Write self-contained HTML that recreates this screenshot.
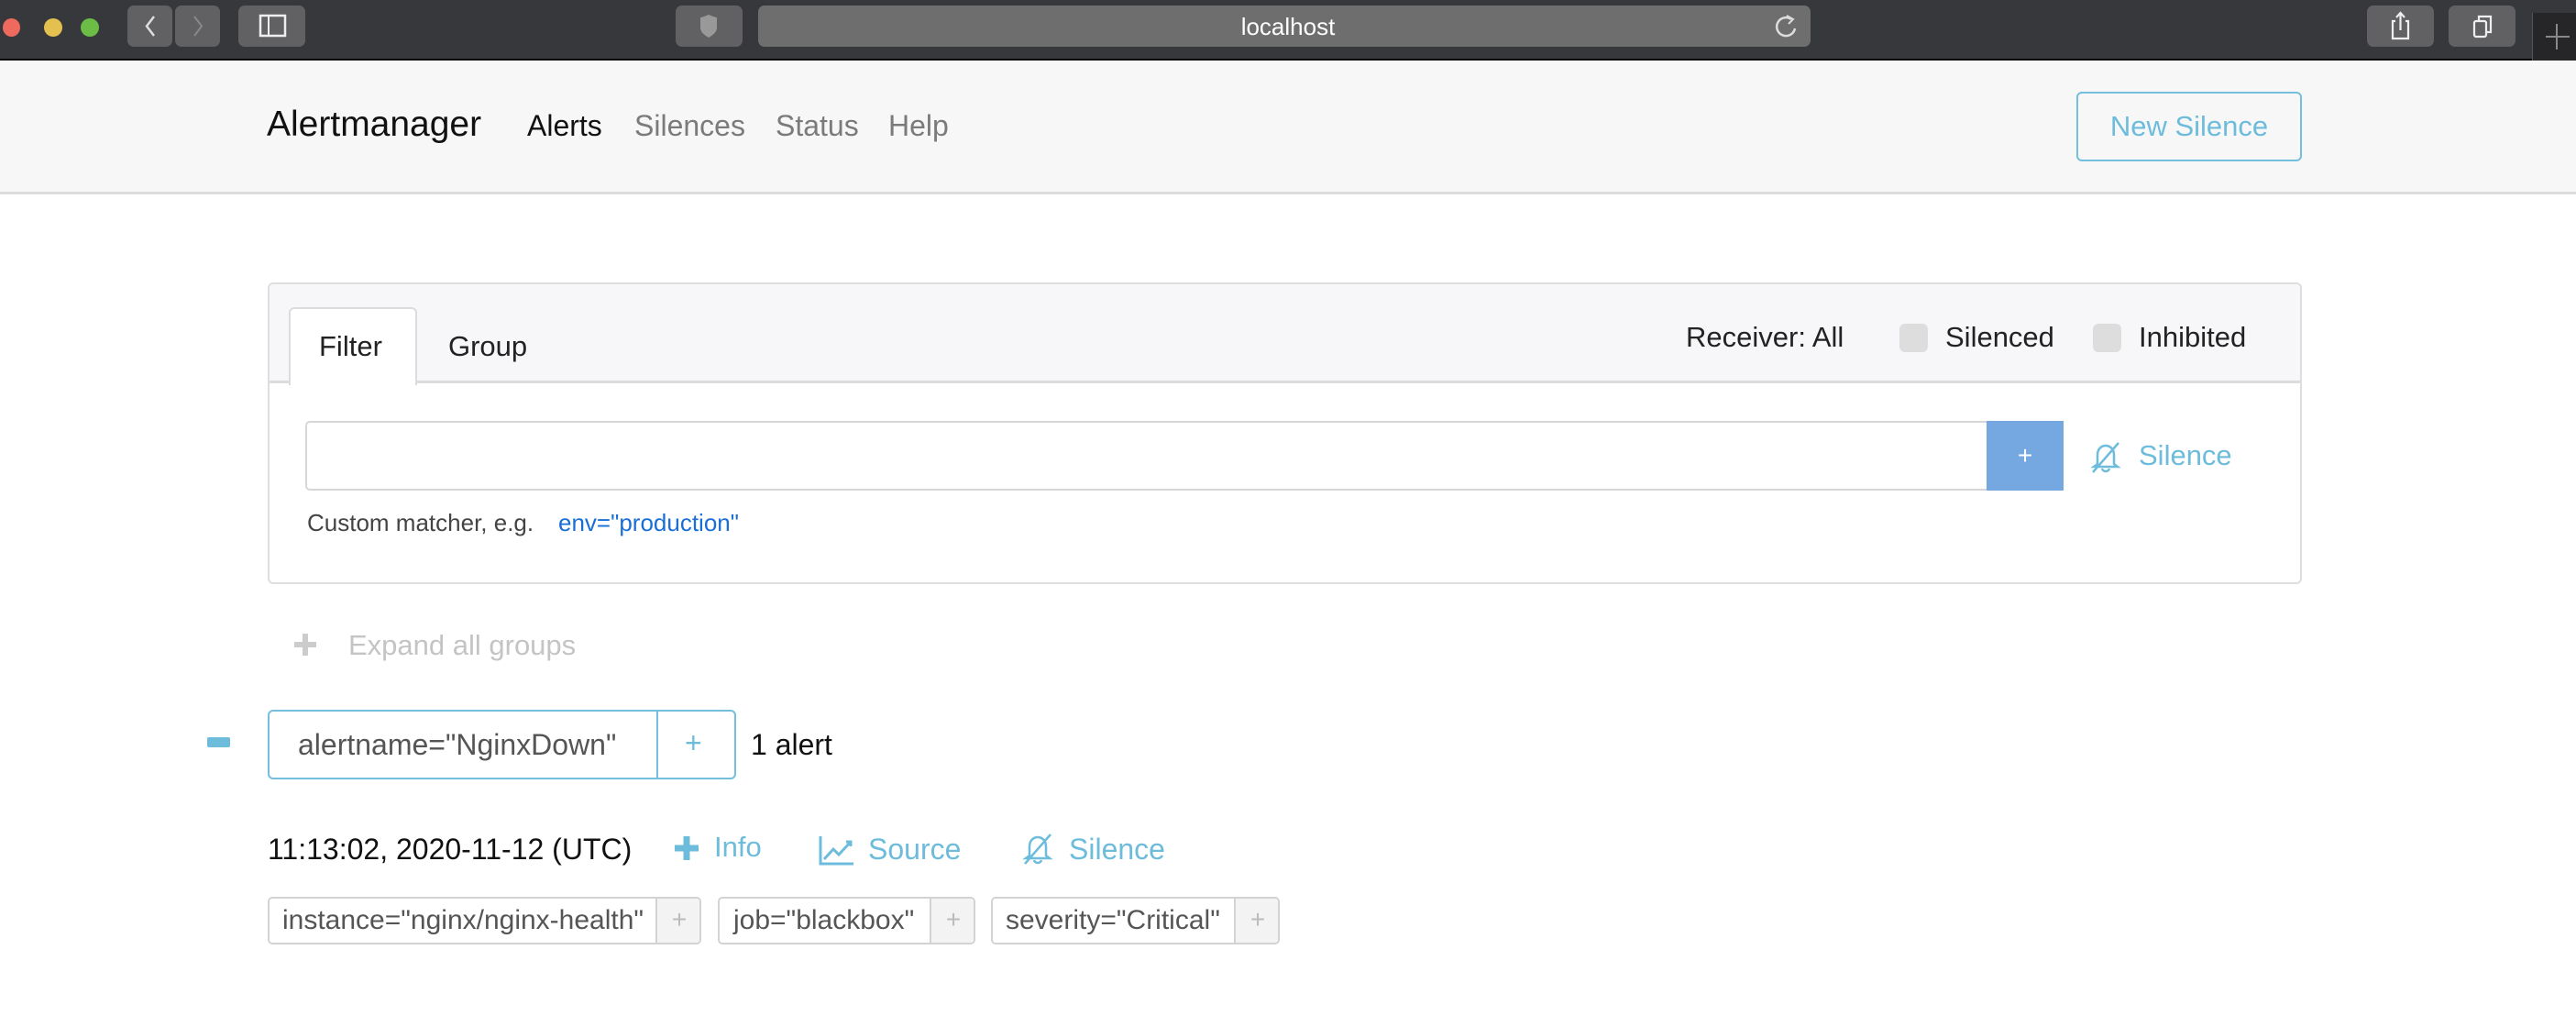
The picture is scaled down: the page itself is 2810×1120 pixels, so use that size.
<!DOCTYPE html>
<html><head><meta charset="utf-8"><style>
*{box-sizing:border-box;margin:0;padding:0}
body{width:2810px;height:1120px;background:#fff;font-family:"Liberation Sans",Arial,sans-serif;position:relative;overflow:hidden;color:#222}
.a{position:absolute;white-space:nowrap}
.tb{left:0;top:0;width:2810px;height:66px;background:#37383b;border-bottom:2px solid #0b0b0b}
.btn{position:absolute;top:6px;height:45px;background:#616163;border-radius:7px}
.hdr{left:0;top:66px;width:2810px;height:146px;background:#f7f7f7;border-bottom:3px solid #dcdcdc}
.vc{display:flex;align-items:center}
</style></head><body>
<div class="a tb">
 <div class="a" style="left:3px;top:20px;width:19px;height:20px;border-radius:50%;background:#ee6a5e"></div>
 <div class="a" style="left:48px;top:20px;width:20px;height:20px;border-radius:50%;background:#e3c04f"></div>
 <div class="a" style="left:88px;top:20px;width:20px;height:20px;border-radius:50%;background:#6cbd45"></div>
 <div class="btn" style="left:139px;width:49px"><svg width="49" height="45"><path d="M29 12 L21 22.5 L29 33" stroke="#ddd" stroke-width="2.5" fill="none"/></svg></div>
 <div class="btn" style="left:191px;width:49px"><svg width="49" height="45"><path d="M21 12 L29 22.5 L21 33" stroke="#888" stroke-width="2" fill="none"/></svg></div>
 <div class="btn" style="left:260px;width:73px"><svg width="73" height="45"><rect x="24" y="11" width="27" height="22" stroke="#eee" stroke-width="2.5" fill="none"/><line x1="33" y1="11" x2="33" y2="33" stroke="#eee" stroke-width="2"/></svg></div>
 <div class="btn" style="left:737px;width:73px"><svg width="73" height="45"><path d="M36 10 C31 12 28 13 27 13 L27 24 C27 29 31 32 36 35 C41 32 45 29 45 24 L45 13 C44 13 41 12 36 10Z" fill="#999"/></svg></div>
 <div class="btn" style="left:827px;width:1148px;background:#6e6e6f"></div>
 <div class="a" style="left:1340px;top:14px;width:130px;text-align:center;color:#fff;font-size:26px">localhost</div>
 <svg class="a" style="left:1935px;top:14px" width="28" height="30"><path d="M19 7 A10 10 0 1 0 23 17" stroke="#ddd" stroke-width="2.5" fill="none"/><path d="M14 3 L21 7 L16 12" fill="none" stroke="#ddd" stroke-width="2"/></svg>
 <div class="btn" style="left:2582px;width:73px"><svg width="73" height="45"><path d="M31 17 L28 17 L28 36 L45 36 L45 17 L42 17 M36.5 27 L36.5 8 M32 13 L36.5 8 L41 13" stroke="#eee" stroke-width="2.2" fill="none"/></svg></div>
 <div class="btn" style="left:2671px;width:73px"><svg width="73" height="45"><rect x="28" y="17" width="13" height="17" rx="2" stroke="#eee" stroke-width="2.2" fill="none"/><path d="M33 17 L33 12 L46 12 L46 29 L41 29" stroke="#eee" stroke-width="2.2" fill="none"/></svg></div>
 <div class="a" style="left:2762px;top:14px;width:48px;height:52px;background:#262628;border-left:1px solid #555"><svg width="48" height="52"><path d="M26 12 V40 M14 26 H40" stroke="#888" stroke-width="2"/></svg></div>
</div>
<div class="a hdr">
 <div class="a" style="left:291px;top:48px;font-size:39px;color:#111">Alertmanager</div>
 <div class="a" style="left:575px;top:53px;font-size:32px;color:#111">Alerts</div>
 <div class="a" style="left:692px;top:53px;font-size:32px;color:#7b7b7b">Silences</div>
 <div class="a" style="left:846px;top:53px;font-size:32px;color:#7b7b7b">Status</div>
 <div class="a" style="left:969px;top:53px;font-size:32px;color:#7b7b7b">Help</div>
 <div class="a vc" style="left:2265px;top:34px;width:246px;height:76px;border:2px solid #73bfdd;border-radius:6px;justify-content:center;color:#6dbcdc;font-size:31px">New Silence</div>
</div>
<div class="a" style="left:292px;top:308px;width:2219px;height:329px;border:2px solid #dedede;border-radius:6px;overflow:hidden">
 <div class="a" style="left:0;top:0;width:2219px;height:108px;background:#f7f7f9;border-bottom:3px solid #dcdcdc"></div>
 <div class="a" style="left:21px;top:25px;width:140px;height:85px;background:#fff;border:2px solid #dcdcdc;border-bottom:none;border-radius:6px 6px 0 0"></div>
 <div class="a" style="left:54px;top:50px;font-size:31px;color:#222">Filter</div>
 <div class="a" style="left:195px;top:50px;font-size:31px;color:#222">Group</div>
 <div class="a" style="left:1545px;top:40px;font-size:31px;color:#222">Receiver: All</div>
 <div class="a" style="left:1778px;top:43px;width:31px;height:31px;background:#ddd;border-radius:6px"></div>
 <div class="a" style="left:1828px;top:40px;font-size:31px;color:#222">Silenced</div>
 <div class="a" style="left:1989px;top:43px;width:31px;height:31px;background:#ddd;border-radius:6px"></div>
 <div class="a" style="left:2039px;top:40px;font-size:31px;color:#222">Inhibited</div>
 <div class="a" style="left:39px;top:149px;width:1836px;height:76px;border:2px solid #d6d6d6;border-right:none;border-radius:5px 0 0 5px;background:#fff"></div>
 <div class="a vc" style="left:1873px;top:149px;width:84px;height:76px;background:#75a7e0;justify-content:center;color:#fff;font-size:28px">+</div>
 <svg class="a" style="left:1983px;top:170px" width="40" height="38" viewBox="0 0 40 38"><path d="M11 26 L11 16 C11 10 15 6 20 6 C25 6 29 10 29 16 L29 26 L33 29 L7 29 Z M16 31 C17 35 23 35 24 31 M6 35 L34 3" fill="none" stroke="#6dbcdc" stroke-width="2.5"/></svg>
 <div class="a" style="left:2039px;top:169px;font-size:31px;color:#6dbcdc">Silence</div>
 <div class="a" style="left:41px;top:245px;font-size:26px;color:#444">Custom matcher, e.g.</div>
 <div class="a" style="left:315px;top:245px;font-size:26px;color:#1a6fd6">env="production"</div>
</div>
<svg class="a" style="left:319px;top:688px" width="28" height="30"><path d="M14 3 V27 M2 15 H26" stroke="#ccc" stroke-width="6"/></svg>
<div class="a" style="left:380px;top:686px;font-size:31px;color:#c4c4c4">Expand all groups</div>
<div class="a" style="left:226px;top:804px;width:25px;height:11px;background:#6dbcdc;border-radius:2px"></div>
<div class="a" style="left:292px;top:774px;width:511px;height:76px;border:2px solid #73bfdd;border-radius:6px"></div>
<div class="a" style="left:716px;top:774px;width:2px;height:76px;background:#73bfdd"></div>
<div class="a" style="left:325px;top:794px;font-size:32px;color:#555">alertname="NginxDown"</div>
<div class="a" style="left:747px;top:792px;font-size:32px;color:#6dbcdc">+</div>
<div class="a" style="left:819px;top:794px;font-size:32px;color:#111">1 alert</div>
<div class="a" style="left:292px;top:908px;font-size:32px;color:#111">11:13:02, 2020-11-12 (UTC)</div>
<svg class="a" style="left:736px;top:911px" width="26" height="28"><path d="M13 1 V27 M0 14 H26" stroke="#6dbcdc" stroke-width="7"/></svg>
<div class="a" style="left:779px;top:906px;font-size:31px;color:#6dbcdc">Info</div>
<svg class="a" style="left:893px;top:910px" width="40" height="34"><path d="M2 2 V32 H38 M6 27 L16 16 L22 22 L35 8 M30 8 H35 V13" fill="none" stroke="#6dbcdc" stroke-width="3"/></svg>
<div class="a" style="left:947px;top:908px;font-size:32px;color:#6dbcdc">Source</div>
<svg class="a" style="left:1112px;top:906px" width="40" height="40" viewBox="0 0 40 38"><path d="M11 26 L11 16 C11 10 15 6 20 6 C25 6 29 10 29 16 L29 26 L33 29 L7 29 Z M16 31 C17 35 23 35 24 31 M6 35 L34 3" fill="none" stroke="#6dbcdc" stroke-width="2.5"/></svg>
<div class="a" style="left:1166px;top:908px;font-size:32px;color:#6dbcdc">Silence</div>
<div class="a" style="left:292px;top:978px;width:473px;height:52px;border:2px solid #d3d3d3;border-radius:5px;overflow:hidden"><div class="a" style="left:421px;top:0;width:50px;height:48px;background:#f3f3f3;border-left:2px solid #d3d3d3;text-align:center;color:#bbb;font-size:28px;line-height:46px">+</div></div>
<div class="a" style="left:308px;top:987px;font-size:30px;color:#555">instance="nginx/nginx-health"</div>
<div class="a" style="left:783px;top:978px;width:281px;height:52px;border:2px solid #d3d3d3;border-radius:5px;overflow:hidden"><div class="a" style="left:229px;top:0;width:50px;height:48px;background:#f3f3f3;border-left:2px solid #d3d3d3;text-align:center;color:#bbb;font-size:28px;line-height:46px">+</div></div>
<div class="a" style="left:800px;top:987px;font-size:30px;color:#555">job="blackbox"</div>
<div class="a" style="left:1081px;top:978px;width:315px;height:52px;border:2px solid #d3d3d3;border-radius:5px;overflow:hidden"><div class="a" style="left:263px;top:0;width:50px;height:48px;background:#f3f3f3;border-left:2px solid #d3d3d3;text-align:center;color:#bbb;font-size:28px;line-height:46px">+</div></div>
<div class="a" style="left:1097px;top:987px;font-size:30px;color:#555">severity="Critical"</div>
</body></html>
